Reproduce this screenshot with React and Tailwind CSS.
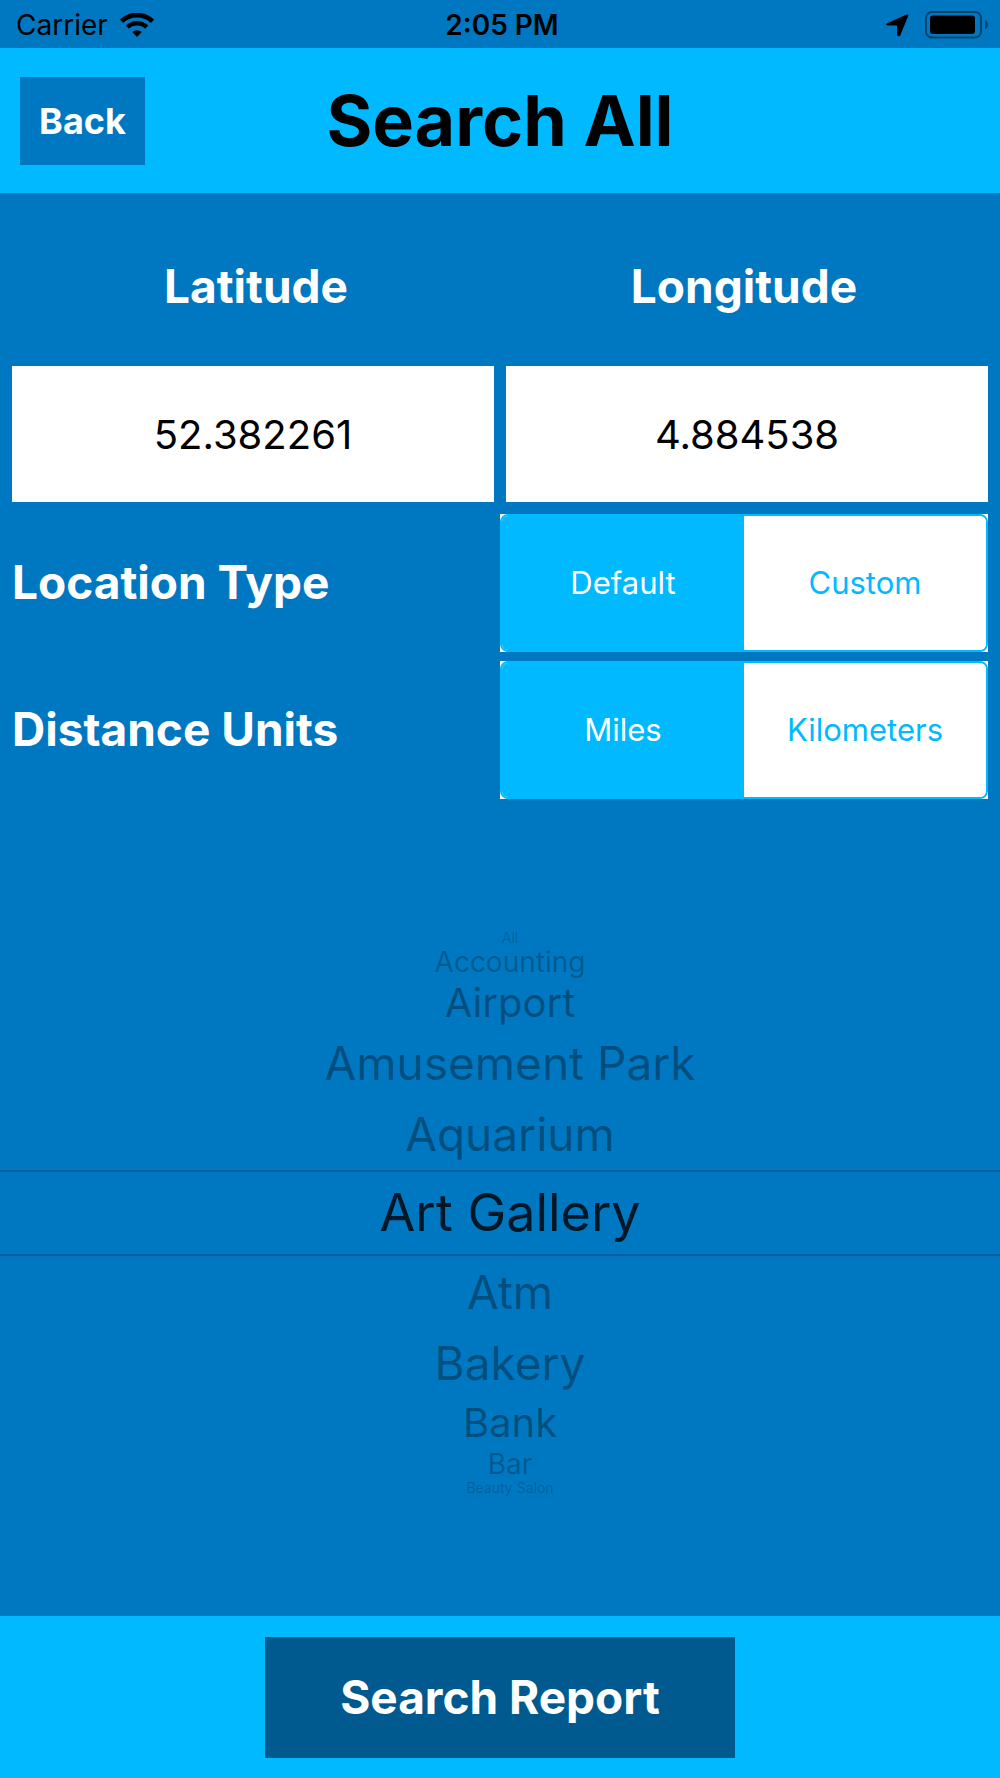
import { useState } from "react";

const wheelRows = [
  { name: "All", style: "h-4 text-[14px] text-black/20" },
  { name: "Accounting", style: "h-8 text-[28px] text-black/25" },
  { name: "Airport", style: "h-[50px] text-[40px] text-black/35" },
  { name: "Amusement Park", style: "h-[70px] text-[46px] text-black/35" },
  { name: "Aquarium", style: "h-[72px] text-[46px] text-black/35" },
  { name: "Art Gallery", style: "h-[86px] border-y-2 border-black/20 text-[52px] text-black/80" },
  { name: "Atm", style: "h-[72px] text-[46px] text-black/35" },
  { name: "Bakery", style: "h-[70px] text-[46px] text-black/35" },
  { name: "Bank", style: "h-[50px] text-[40px] text-black/35" },
  { name: "Bar", style: "h-8 text-[28px] text-black/25" },
  { name: "Beauty Salon", style: "h-4 text-[14px] text-black/20" },
];

function WifiIcon() {
  return (
    <svg width="34" height="24" viewBox="0 0 34 24" aria-hidden="true">
      <g fill="none" stroke="#000">
        <path d="M1.5 8.3 A22.5 22.5 0 0 1 32.5 8.3" strokeWidth="4.8" />
        <path d="M7.3 14.2 A14 14 0 0 1 26.7 14.2" strokeWidth="4.6" />
      </g>
      <path d="M12.2 19 A7.4 7.4 0 0 1 21.8 19 L17 24 Z" fill="#000" />
    </svg>
  );
}

function LocationIcon() {
  return (
    <svg width="23" height="23" viewBox="0 0 23 23" aria-hidden="true">
      <path
        d="M1.2 9.2 L20.6 0.4 Q22.8 -0.2 22.2 2 L14.2 21.4 Q13.6 22.5 12.4 22.3 Q11 22.2 11 20.8 V11.6 H1.8 Q0.4 11.6 0.2 10.5 Q0.2 9.6 1.2 9.2 Z"
        fill="#000"
      />
    </svg>
  );
}

function BatteryIcon() {
  return (
    <svg width="63" height="28" viewBox="0 0 63 28" aria-hidden="true">
      <rect x="1" y="1" width="55" height="25.5" rx="6" fill="none" stroke="#000" strokeOpacity="0.42" strokeWidth="2" />
      <rect x="5" y="4.5" width="45" height="18.5" rx="3" fill="#000" />
      <path d="M60 9 Q63 10.5 63 13.8 Q63 17 60 18.5 Z" fill="#000" fillOpacity="0.42" />
    </svg>
  );
}

function CoordinateField({ id, value }) {
  return (
    <input
      id={id}
      defaultValue={value}
      inputMode="decimal"
      className="h-[136px] w-full min-w-0 bg-white text-center text-[40px] text-black outline-none"
    />
  );
}

function SegmentedRow({ label, options }) {
  const [selected, setSelected] = useState(options[0]);
  return (
    <div className="grid h-[138px] grid-cols-2 items-stretch">
      <span className="flex items-center pb-0.5 text-[46px] font-bold text-white">{label}</span>
      <div className="bg-white">
        <div
          role="group"
          aria-label={label}
          className="grid h-full grid-cols-2 overflow-hidden rounded-lg border-2 border-[#00b9ff]"
        >
          {options.map((option) => (
            <button
              key={option}
              type="button"
              aria-pressed={option === selected}
              onClick={() => setSelected(option)}
              className={
                option === selected
                  ? "bg-[#00b9ff] text-[31px] text-white"
                  : "bg-white text-[31px] text-[#00b9ff]"
              }
            >
              {option}
            </button>
          ))}
        </div>
      </div>
    </div>
  );
}

export default function App() {
  const [place, setPlace] = useState("Art Gallery");
  return (
    <div className="flex min-h-screen flex-col bg-[#0078c1] font-['Inter',sans-serif] text-black">
      <div className="grid h-12 grid-cols-[1fr_auto_1fr] items-center pt-0.5 pr-3 pl-4 text-[28px]">
        <div className="flex items-center gap-3">
          <span>Carrier</span>
          <WifiIcon />
        </div>
        <span className="text-center font-semibold">2:05 PM</span>
        <div className="flex items-center justify-end gap-4">
          <LocationIcon />
          <BatteryIcon />
        </div>
      </div>

      <header className="grid h-[145px] grid-cols-[1fr_auto_1fr] items-center bg-[#00b9ff] px-5">
        <button type="button" className="h-[88px] w-[125px] bg-[#0078c1] text-[36px] font-bold text-white">
          Back
        </button>
        <h1 className="text-[70px] leading-none font-bold">Search All</h1>
      </header>

      <main className="flex flex-1 flex-col">
        <section className="px-3">
          <div className="grid h-[173px] grid-cols-2 items-center pt-3.5 text-center text-[46px] font-bold text-white">
            <label htmlFor="latitude">Latitude</label>
            <label htmlFor="longitude">Longitude</label>
          </div>
          <div className="grid grid-cols-2 gap-3">
            <CoordinateField id="latitude" value="52.382261" />
            <CoordinateField id="longitude" value="4.884538" />
          </div>
          <div className="mt-3 flex flex-col gap-[9px]">
            <SegmentedRow label="Location Type" options={["Default", "Custom"]} />
            <SegmentedRow label="Distance Units" options={["Miles", "Kilometers"]} />
          </div>
        </section>

        <div role="listbox" aria-label="Place type" className="flex flex-1 flex-col justify-center pt-2.5">
          {wheelRows.map(({ name, style }) => (
            <button
              key={name}
              type="button"
              role="option"
              aria-selected={name === place}
              onClick={() => setPlace(name)}
              className={`flex w-full items-center justify-center pl-5 leading-none ${style}`}
            >
              {name}
            </button>
          ))}
        </div>
      </main>

      <footer className="flex h-[162px] items-center justify-center bg-[#00b9ff]">
        <button type="button" className="h-[121px] w-[47%] bg-[#005a8f] text-[46px] font-bold text-white">
          Search Report
        </button>
      </footer>
    </div>
  );
}
